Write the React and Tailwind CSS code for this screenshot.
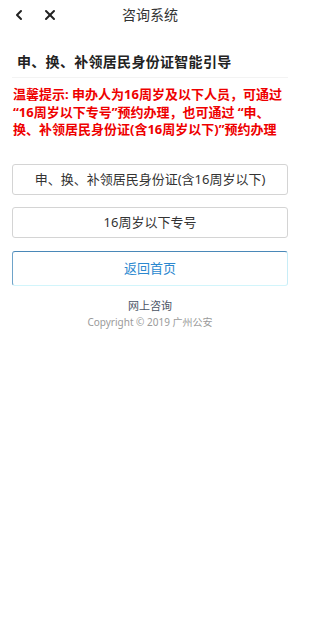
import { ChevronLeft, X } from 'lucide-react';

function GuideButton({ children }) {
  return (
    <button className="w-full h-[31px] rounded-[3px] border border-[#d4d4d4] bg-white text-[13px] leading-none text-[#333]">
      {children}
    </button>
  );
}

export default function App() {
  return (
    <div className="w-[300px] h-[621px] bg-white font-['Noto_Sans','Noto_Sans_CJK_SC',sans-serif]">
      {/* Header */}
      <div className="relative h-[30px] flex items-center">
        <div className="flex items-center gap-[15px] pl-[11px]">
          <ChevronLeft size={16} strokeWidth={3} className="text-[#222]" />
          <X size={16} strokeWidth={3} className="text-[#222]" />
        </div>
        <p className="absolute inset-x-0 text-center text-[14px] leading-[30px] text-[#333] pointer-events-none">咨询系统</p>
      </div>

      {/* Title */}
      <h1 className="mt-[22px] pl-[17px] text-[14px] leading-[20px] tracking-[0.3px] font-semibold text-[#222]">
        申、换、补领居民身份证智能引导
      </h1>
      <div className="mx-[12px] mt-[5px] h-px bg-[#f3f3f3]" />

      {/* Notice */}
      <p className="mt-[8px] pl-[13px] pr-[4px] whitespace-nowrap text-[13px] leading-[17.5px] font-bold text-[#ee0000]">
        温馨提示: 申办人为16周岁及以下人员，可通过<br />
        “16周岁以下专号”预约办理，也可通过 “申、<br />
        换、补领居民身份证(含16周岁以下)”预约办理
      </p>

      {/* Actions */}
      <div className="mt-[25px] px-[12px] flex flex-col gap-[12px]">
        <GuideButton>申、换、补领居民身份证(含16周岁以下)</GuideButton>
        <GuideButton>16周岁以下专号</GuideButton>
        <button className="mt-px w-full h-[35px] rounded-[3px] border border-t-[#4a88b8] border-l-[#6ea3c9] border-r-[#c8edf7] border-b-[#d2f5fb] bg-white text-[13px] leading-none text-[#2b88cf]">
          返回首页
        </button>
      </div>

      {/* Footer */}
      <div className="mt-[12px] flex flex-col items-center">
        <p className="text-[11px] leading-[16px] text-[#4b5565]">网上咨询</p>
        <p className="text-[10px] leading-[16px] text-[#9a9a9a]">Copyright © 2019 广州公安</p>
      </div>
    </div>
  );
}
